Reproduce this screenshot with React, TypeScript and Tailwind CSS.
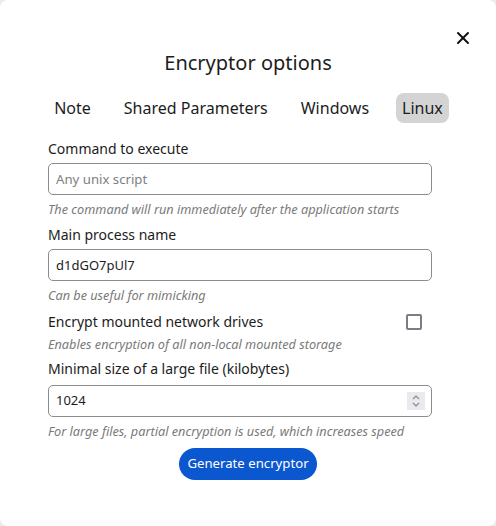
import React from 'react';
import { X } from 'lucide-react';

const font = { fontFamily: '"Noto Sans", "Open Sans", sans-serif' };

const Hint = ({ children }: { children: React.ReactNode }) => (
  <p className="mt-[6px] text-[12.7px] leading-4 italic text-[#7a7a7a]">{children}</p>
);

const Label = ({ children }: { children: React.ReactNode }) => (
  <label className="block text-[14px] leading-6 text-[#1c1c1c]">{children}</label>
);

export default function App() {
  const tabs = ['Note', 'Shared Parameters', 'Windows', 'Linux'];
  const active = 'Linux';

  return (
    <div className="h-[526px] w-[496px] bg-[#ececec]" style={font}>
      <div className="relative h-full w-full rounded-lg bg-white pl-12 pr-16 pt-[49px]">
        <button className="absolute right-[23px] top-[28px] text-[#111]">
          <X size={20} strokeWidth={2.4} />
        </button>

        <h2 className="-mr-4 text-center text-[20px] leading-7 text-[#1c1c1c]">Encryptor options</h2>

        <div className="-mr-[17px] mt-[16px] flex justify-center gap-[21px]">
          {tabs.map((t) => (
            <div
              key={t}
              className={
                'h-[30px] whitespace-nowrap rounded-lg px-1.5 text-[16px] leading-[30px] text-[#1c1c1c] ' +
                (t === active ? 'bg-[#d4d4d4]' : '')
              }
            >
              {t}
            </div>
          ))}
        </div>

        <div className="mt-[14px]">
          <Label>Command to execute</Label>
          <input
            className="mt-[2px] h-8 w-full rounded-[5px] border border-[#8c8c8c] px-[7px] text-[13.2px] text-[#1c1c1c] outline-none placeholder:text-[#808080]"
            placeholder="Any unix script"
          />
          <Hint>The command will run immediately after the application starts</Hint>
        </div>

        <div className="mt-[6px]">
          <Label>Main process name</Label>
          <input
            className="mt-[2px] h-8 w-full rounded-[5px] border border-[#8c8c8c] px-[7px] text-[13px] text-[#1c1c1c] outline-none"
            defaultValue="d1dGO7pUl7"
          />
          <Hint>Can be useful for mimicking</Hint>
        </div>

        <div className="mt-[7px]">
          <div className="flex items-center justify-between">
            <Label>Encrypt mounted network drives</Label>
            <div className="mr-[10px] h-4 w-4 rounded-[2px] border-2 border-[#7c7c86]" />
          </div>
          <p className="mt-[2px] text-[12.7px] leading-4 italic text-[#7a7a7a]">Enables encryption of all non-local mounted storage</p>
        </div>

        <div className="mt-[5px]">
          <Label>Minimal size of a large file (kilobytes)</Label>
          <div className="mt-[4px] flex h-8 w-full items-center rounded-[5px] border border-[#8c8c8c] pl-[7px] pr-[6px]">
            <span className="flex-1 text-[13px] text-[#1c1c1c]">1024</span>
            <div className="flex h-[18px] w-[18px] flex-col items-center justify-center bg-[#e9e9ee]">
              <svg width="10" height="14" viewBox="0 0 10 14" fill="none" stroke="#8a8a90" strokeWidth="1.2">
                <path d="M2 5 L5 2 L8 5" />
                <path d="M2 9 L5 12 L8 9" />
              </svg>
            </div>
          </div>
          <Hint>For large files, partial encryption is used, which increases speed</Hint>
        </div>

        <div className="-mr-4 mt-[9px] flex justify-center">
          <button className="h-8 rounded-full bg-[#0b57d0] px-2 text-[13.2px] text-white">Generate encryptor</button>
        </div>
      </div>
    </div>
  );
}
